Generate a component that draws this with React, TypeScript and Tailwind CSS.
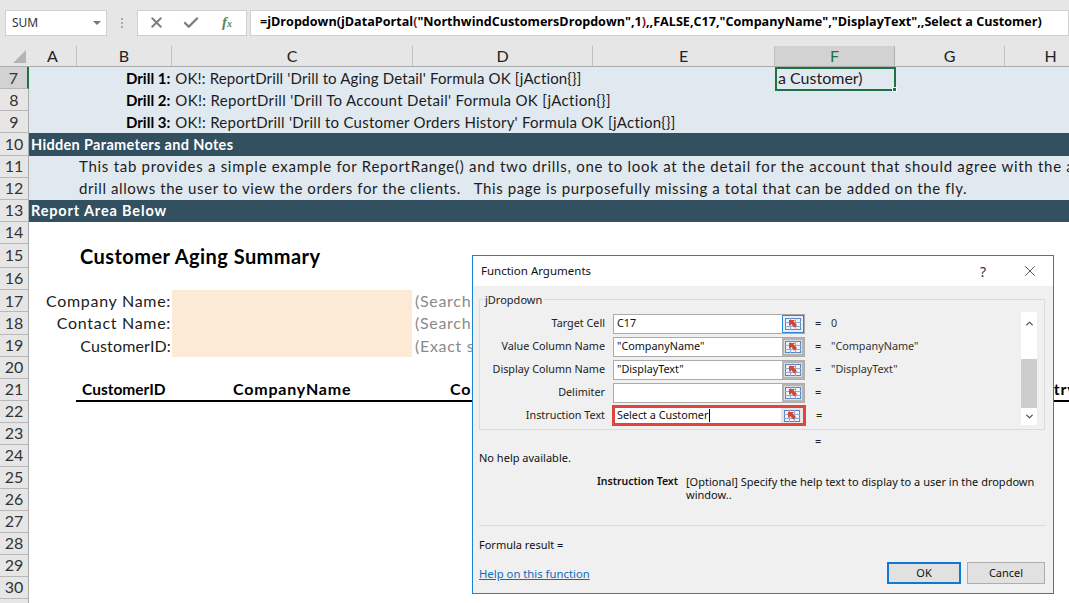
import { Check, ChevronDown, ChevronUp, X } from "lucide-react";

const columns = [
  { label: "A", width: 48 },
  { label: "B", width: 95 },
  { label: "C", width: 241 },
  { label: "D", width: 180 },
  { label: "E", width: 182 },
  { label: "F", width: 120 },
  { label: "G", width: 110 },
  { label: "H", width: 92 },
];

const rowNumbers = Array.from({ length: 25 }, (_, i) => i + 7);

const sheetFont = "font-['Lato','Liberation_Sans',sans-serif]";
const dialogFont = "font-['Noto_Sans','Open_Sans',sans-serif]";

const rowHeight = (row: number) => {
  if (row <= 13) return "h-[22.140px]";
  if (row === 15) return "h-[24px]";
  if (row >= 17 && row <= 19) return "h-[22.330px]";
  return "h-[22px]";
};

const RefEditIcon = () => (
  <svg width="16" height="12" viewBox="0 0 16 12">
    <rect x="0.5" y="0.5" width="15" height="11" fill="#eef3fa" stroke="#5b85c0" />
    <path d="M0 4.500h16M0 8.500h16M5.500 0v12M10.500 0v12" stroke="#8fabd3" strokeWidth="1" />
    <path d="M4 2h6L8.500 3.500 12 7 9.500 9.500 6 6 4 8z" fill="#d9452c" />
  </svg>
);

function Argument({
  label,
  value,
  result,
  active,
  focused,
}: {
  label: string;
  value?: string;
  result?: string;
  active?: boolean;
  focused?: boolean;
}) {
  return (
    <div className="flex h-[23px] items-center">
      <div className="w-[116px] shrink-0 text-right text-[10.800px] text-[#222]">{label}</div>
      <div
        className={
          focused
            ? "ml-[7px] flex h-[21px] w-[194px] items-center border-[3px] border-[#e0443e] bg-white"
            : "ml-[8px] flex h-[20px] w-[192px] items-center border border-[#ababab] bg-white"
        }
      >
        <div className={`flex flex-1 items-center text-[10.800px] leading-none text-[#111] ${focused ? "pl-[2px]" : "pl-[3px]"}`}>
          {value}
          {focused && <span className="ml-px h-[13px] w-px bg-black" />}
        </div>
        <div
          className={`flex h-full w-[22px] items-center justify-center ${
            active
              ? "border border-[#2b85d8] bg-[#e8eef5]"
              : focused
                ? "bg-[#e6e6e6]"
                : "border-2 border-[#b5b5b5] bg-[#dcdcdc]"
          }`}
        >
          <RefEditIcon />
        </div>
      </div>
      <span className="ml-[10px] w-[16px] text-[11px] text-[#222]">=</span>
      <span className="text-[10.800px] text-[#333]">{result}</span>
    </div>
  );
}

function FunctionArguments() {
  return (
    <div
      className={`absolute left-[472px] top-[255px] flex h-[339px] w-[582px] flex-col border border-[#1b83d6] bg-[#f0f0f0] ${dialogFont}`}
    >
      <div className="flex h-[30px] shrink-0 items-center justify-between bg-white pl-2 pr-[14px]">
        <span className="text-[11.500px] text-[#111]">Function Arguments</span>
        <div className="flex items-center gap-[35px]">
          <span className="text-[14px] text-[#333]">?</span>
          <X size={18} strokeWidth={1} className="text-[#222]" />
        </div>
      </div>

      <div className="relative mx-[6px] mt-[13px] h-[131px] w-[566px] shrink-0 border border-[#dcdcdc] pt-[12px] pl-[9px]">
        <span className="absolute -top-[8px] left-[3px] bg-[#f0f0f0] px-[2px] text-[11px] leading-[15px] text-[#222]">
          jDropdown
        </span>
        <Argument label="Target Cell" value="C17" result="0" active />
        <Argument label="Value Column Name" value={'"CompanyName"'} result={'"CompanyName"'} />
        <Argument label="Display Column Name" value={'"DisplayText"'} result={'"DisplayText"'} />
        <Argument label="Delimiter" />
        <Argument label="Instruction Text" value="Select a Customer" focused />

        <div className="absolute right-[7px] top-[12px] flex h-[113px] w-[16px] flex-col items-center justify-between bg-white">
          <ChevronUp size={11} strokeWidth={3} className="mt-[6px] text-[#555]" />
          <div className="absolute top-[47px] h-[49px] w-full bg-[#cdcdcd]" />
          <ChevronDown size={11} strokeWidth={3} className="mb-[3px] text-[#555]" />
        </div>
      </div>

      <div className="ml-[342px] mt-[3px] h-[16px] text-[11px] leading-[16px] text-[#222]">=</div>

      <div className="ml-[6px] mt-[1px] text-[11px] leading-[15px] text-[#111]">No help available.</div>

      <div className="mt-[10px] flex text-[11px] leading-[13px] text-[#111]">
        <div className="w-[205px] shrink-0 text-right text-[10.500px] font-semibold">Instruction Text</div>
        <div className="ml-[8px] w-[356px]">
          [Optional] Specify the help text to display to a user in the dropdown window..
        </div>
      </div>

      <div className="mx-[6px] mt-[24px] h-px w-[567px] shrink-0 bg-[#dcdcdc]" />

      <div className="ml-[6px] mt-[11px] text-[11px] leading-[15px] text-[#111]">Formula result =</div>

      <div className="mx-[6px] mt-[10px] flex items-start justify-between pr-[2px]">
        <a className="mt-[4px] text-[11.300px] leading-[15px] text-[#0f6cbd] underline">Help on this function</a>
        <div className="flex gap-[6px]">
          <button className="h-[22px] w-[74px] border-2 border-[#0f78d4] bg-[#e1e1e1] text-[11px] text-[#111]">OK</button>
          <button className="h-[22px] w-[78px] border border-[#adadad] bg-[#e1e1e1] text-[11px] text-[#111]">Cancel</button>
        </div>
      </div>
    </div>
  );
}

function RowContent({ row }: { row: number }) {
  const label = "whitespace-pre text-[15px] text-[#1c1c1c]";
  const bold = "whitespace-nowrap text-[15px] font-bold text-black";
  const headBold = "whitespace-nowrap text-[16px] font-bold tracking-[0.8px] text-black";

  if (row >= 7 && row <= 9) {
    const drills: Record<number, [string, string]> = {
      7: ["OK!: ReportDrill 'Drill to Aging Detail' Formula OK [jAction{}]", "tracking-[0.15px]"],
      8: ["OK!: ReportDrill 'Drill To Account Detail' Formula OK [jAction{}]", "tracking-[0.32px]"],
      9: ["OK!: ReportDrill 'Drill to Customer Orders History' Formula OK [jAction{}]", "tracking-[0.25px]"],
    };
    return (
      <div className="flex h-full items-center bg-[#e1e9f0] pl-[97px]">
        <span className={bold}>Drill {row - 6}:</span>
        <span className={`ml-[5px] ${label} ${drills[row][1]}`}>{drills[row][0]}</span>
      </div>
    );
  }
  if (row === 10 || row === 13) {
    return (
      <div className="flex h-full items-center bg-[#32505f] pl-[2px]">
        <span
          className={`whitespace-nowrap text-[14.500px] font-bold text-white ${
            row === 10 ? "tracking-[0.33px]" : "tracking-[0.85px]"
          }`}
        >
          {row === 10 ? "Hidden Parameters and Notes" : "Report Area Below"}
        </span>
      </div>
    );
  }
  if (row === 11 || row === 12) {
    return (
      <div className="flex h-full items-center bg-[#e1e9f0] pl-[50px]">
        <span className={`${label} ${row === 11 ? "tracking-[0.72px]" : "tracking-[0.6px]"}`}>
          {row === 11
            ? "This tab provides a simple example for ReportRange() and two drills, one to look at the detail for the account that should agree with the aging."
            : "drill allows the user to view the orders for the clients.   This page is purposefully missing a total that can be added on the fly."}
        </span>
      </div>
    );
  }
  if (row === 15) {
    return (
      <div className="flex h-full items-center pl-[51px]">
        <span className="whitespace-nowrap text-[20px] font-bold tracking-[0.45px] text-black">Customer Aging Summary</span>
      </div>
    );
  }
  if (row >= 17 && row <= 19) {
    const fields: Record<number, [string, string, string]> = {
      17: ["Company Name:", "(Search", "tracking-[0.7px]"],
      18: ["Contact Name:", "(Search", "tracking-[0.7px]"],
      19: ["CustomerID:", "(Exact s", "tracking-[0.15px]"],
    };
    return (
      <div className="flex h-full items-center">
        <div className={`w-[143px] shrink-0 pr-[1px] text-right text-[16px] whitespace-nowrap text-[#1c1c1c] ${fields[row][2]}`}>
          {fields[row][0]}
        </div>
        <div className="h-full w-[240px] shrink-0 bg-[#fdead6]" />
        <span className="ml-[3px] whitespace-nowrap text-[16px] tracking-[0.7px] text-[#8a8a8a]">{fields[row][1]}</span>
      </div>
    );
  }
  if (row === 21) {
    return (
      <div className="ml-[47px] flex h-[23px] items-center border-b-2 border-black pl-[6px]">
        <span className="w-[151px] shrink-0 whitespace-nowrap text-[15.500px] font-bold text-black">CustomerID</span>
        <span className={`w-[217px] shrink-0 ${headBold}`}>CompanyName</span>
        <span className={`w-[563px] shrink-0 ${headBold}`}>ContactName</span>
        <span className={headBold}>Country</span>
      </div>
    );
  }
  return null;
}

export default function App() {
  return (
    <div className={`relative h-[603px] w-[1069px] overflow-hidden bg-white ${sheetFont}`}>
      {/* formula bar */}
      <div className="flex h-[46px] items-center bg-[#e6e6e6] pl-[5px] pb-[1px]">
        <div className="flex h-[26px] w-[102px] items-center justify-between border border-[#d0d0d0] bg-white pl-[6px] pr-[5px] font-['Noto_Sans',sans-serif] text-[12px] text-[#333]">
          SUM
          <span className="h-0 w-0 border-x-[4px] border-t-[4px] border-x-transparent border-t-[#777]" />
        </div>
        <div className="ml-[14px] flex w-[4px] flex-col gap-[2px]">
          <span className="h-[2px] w-[2px] bg-[#aaa]" />
          <span className="h-[2px] w-[2px] bg-[#aaa]" />
          <span className="h-[2px] w-[2px] bg-[#aaa]" />
        </div>
        <div className="ml-[12px] flex h-[26px] w-[110px] items-center border border-[#d0d0d0] bg-white pl-[10px]">
          <X size={17} strokeWidth={2.8} className="text-[#7e7e7e]" />
          <Check size={18} strokeWidth={3.2} className="ml-[17px] text-[#7e7e7e]" />
          <span className="ml-[22px] font-['Liberation_Serif',serif] text-[15px] font-bold italic leading-none text-[#4d8a68]">
            f<span className="text-[10px]">x</span>
          </span>
        </div>
        <div className="ml-[3px] flex h-[26px] flex-1 items-center border border-[#d0d0d0] bg-white pl-[9px] font-['Open_Sans',sans-serif] text-[12.600px] font-bold whitespace-nowrap text-black">
          =jDropdown(jDataPortal<span className="text-[#8a1a1a]">(</span>"NorthwindCustomersDropdown",1<span className="text-[#8a1a1a]">)</span>,,FALSE,C17,"CompanyName","DisplayText",,Select a Customer)
        </div>
      </div>

      {/* column headers */}
      <div className="flex h-[21px] bg-[#e6e6e6]">
        <div className="flex w-[29px] shrink-0 items-end justify-end border-b border-[#ababab] pr-[3px] pb-[3px]">
          <span className="h-0 w-0 border-b-[13px] border-l-[13px] border-b-[#b5b5b5] border-l-transparent" />
        </div>
        {columns.map((c) => (
          <div
            key={c.label}
            style={{ width: c.width }}
            className={`flex shrink-0 items-center justify-center border-b border-b-[#ababab] text-[16px] ${
              c.label === "F" ? "border-r border-r-[#b0b0b0] bg-[#d2d2d2] text-[#1f6e43]" : "border-r border-r-[#c0c0c0] text-[#222]"
            }`}
          >
            {c.label}
          </div>
        ))}
      </div>

      {/* rows */}
      {rowNumbers.map((row) => (
        <div key={row} className={`flex ${rowHeight(row)}`}>
          <div
            className={`flex w-[29px] shrink-0 items-center justify-center border-b border-[#b8b8b8] text-[16px] text-[#333] ${
              row === 7 ? "border-r-2 border-r-[#1f7145] bg-[#d2d2d2]" : "border-r border-r-[#ababab] bg-[#e6e6e6]"
            }`}
          >
            {row <= 30 ? row : ""}
          </div>
          <div className="min-w-0 flex-1">
            <RowContent row={row} />
          </div>
        </div>
      ))}

      {/* selected cell */}
      <div className="absolute left-[775px] top-[67px] flex h-[24px] w-[121px] items-center border-2 border-[#1f7145] pb-[2px] pl-[1px] text-[16px] whitespace-nowrap text-[#1c1c1c]">
        a Customer)
        <span className="absolute -right-[3px] -bottom-[3px] h-[5px] w-[5px] border border-white bg-[#1f7145]" />
      </div>

      <FunctionArguments />
    </div>
  );
}
